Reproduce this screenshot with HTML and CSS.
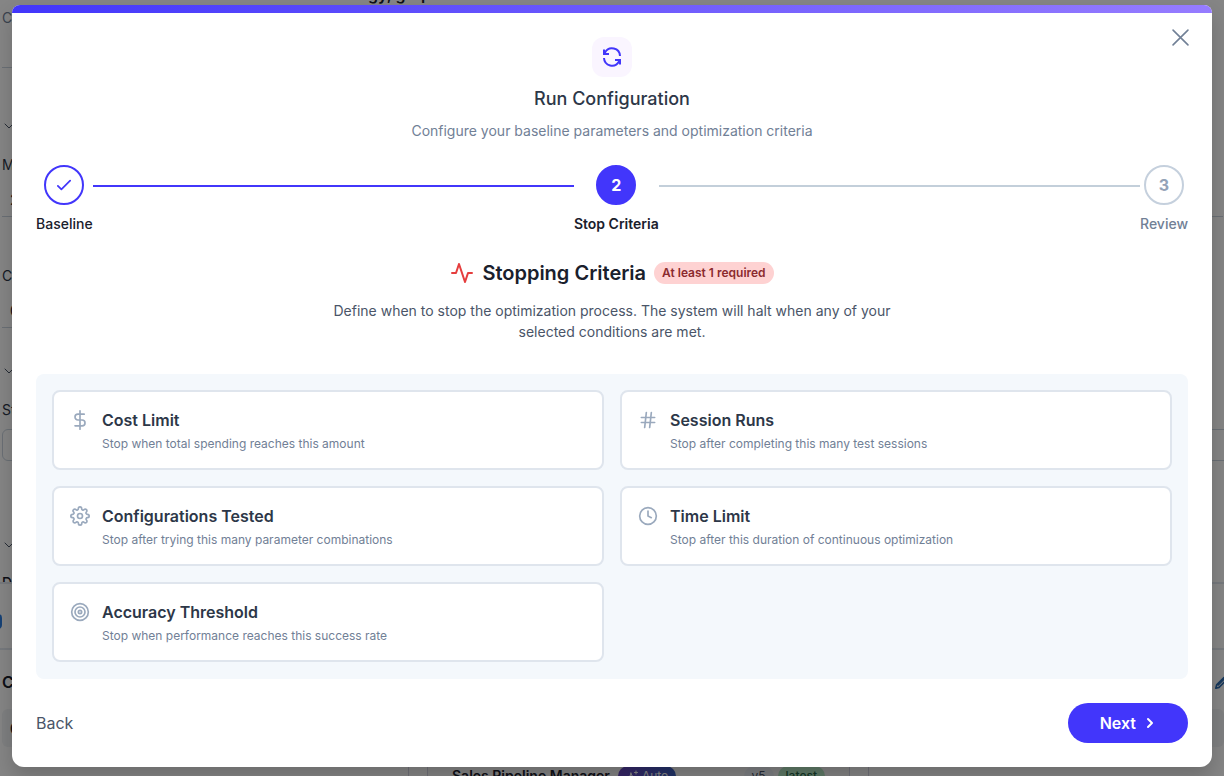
FILE: index.html
```html
<!DOCTYPE html>
<html lang="en">
<head>
<meta charset="utf-8">
<meta name="viewport" content="width=device-width, initial-scale=1">
<title>Run Configuration</title>
<link rel="stylesheet" href="styles.css">
</head>
<body>
<div class="page" aria-hidden="true">
  <span class="bg-item page-heading">gy, graph</span>
  <span class="bg-item page-copy">Co</span>
  <span class="bg-item rule rule-a"></span>
  <svg class="bg-item chev chev-a" viewBox="0 0 12 12"><path d="M2 4l4 4 4-4"/></svg>
  <span class="bg-item label label-a">M</span>
  <span class="bg-item value value-a">2</span>
  <span class="bg-item rule rule-b"></span>
  <span class="bg-item label label-b">C</span>
  <span class="bg-item value value-b">0</span>
  <span class="bg-item rule rule-c"></span>
  <svg class="bg-item chev chev-b" viewBox="0 0 12 12"><path d="M2 4l4 4 4-4"/></svg>
  <span class="bg-item label label-c">St</span>
  <span class="bg-item field"></span>
  <svg class="bg-item chev chev-c" viewBox="0 0 12 12"><path d="M2 4l4 4 4-4"/></svg>
  <span class="bg-item cut-label">D</span>
  <span class="bg-item divider divider-a"></span>
  <span class="bg-item blue-chip"></span>
  <span class="bg-item divider divider-b"></span>
  <span class="bg-item section">C</span>
  <span class="bg-item row-box"></span>
  <span class="bg-item dot-value">0</span>
  <svg class="bg-item pencil" viewBox="0 0 16 16"><path d="M1 15l1-4L11 2l3 3-9 9-4 1zM4 11l7-7"/></svg>
  <div class="bg-item lane">
    <div class="lane-card">
      <strong class="lane-name">Sales Pipeline Manager</strong>
      <span class="lane-auto"><svg viewBox="0 0 12 12"><path d="M5 3l1 3 3 1-3 1-1 3-1-3-3-1 3-1zM10 1v3M8.500 2.500h3"/></svg>Auto</span>
      <span class="lane-version">v5</span>
      <span class="lane-latest">latest</span>
    </div>
  </div>
</div>

<div class="overlay">
  <main class="modal" role="dialog" aria-modal="true" aria-labelledby="dialog-title">
    <div class="accent"></div>
    <button class="close" type="button" aria-label="Close">
      <svg viewBox="0 0 16 16"><path d="M1 1l14 14M15 1L1 15"/></svg>
    </button>
    <div class="content">
      <header class="header">
        <span class="header-icon">
          <svg viewBox="0 0 20 20"><path d="M18 9A8 8 0 0 0 3 5.500L2 7M2 2.500V7h5M2 11a8 8 0 0 0 15 3.500l1-1.500M18 17.500V13h-5"/></svg>
        </span>
        <h1 class="title" id="dialog-title">Run Configuration</h1>
        <p class="subtitle">Configure your baseline parameters and optimization criteria</p>
      </header>

      <ol class="steps">
        <li class="step">
          <span class="circle circle-done"><svg viewBox="0 0 16 16"><path d="M1 9l4 4L15 3"/></svg></span>
          <span class="step-label">Baseline</span>
        </li>
        <li class="line line-done" role="presentation"></li>
        <li class="step" aria-current="step">
          <span class="circle circle-current">2</span>
          <span class="step-label step-label-current">Stop Criteria</span>
        </li>
        <li class="line" role="presentation"></li>
        <li class="step">
          <span class="circle">3</span>
          <span class="step-label step-label-next">Review</span>
        </li>
      </ol>

      <section class="intro">
        <div class="intro-heading">
          <svg class="pulse" viewBox="0 0 24 24"><path d="M22 12h-4l-3 9L9 3l-3 9H2"/></svg>
          <h2 class="intro-title">Stopping Criteria</h2>
          <span class="badge">At least 1 required</span>
        </div>
        <p class="intro-copy">Define when to stop the optimization process. The system will halt when any of your selected conditions are met.</p>
      </section>

      <section class="options">
        <button class="option" type="button">
          <svg class="option-icon" viewBox="0 0 24 24"><path d="M12 1v22M17 5H9.500a3.500 3.500 0 0 0 0 7h5a3.500 3.500 0 0 1 0 7H6"/></svg>
          <span class="option-text"><span class="option-title">Cost Limit</span><span class="option-copy">Stop when total spending reaches this amount</span></span>
        </button>
        <button class="option" type="button">
          <svg class="option-icon" viewBox="0 0 24 24"><path d="M4 9h16M4 15h16M10 3L8 21M16 3l-2 18"/></svg>
          <span class="option-text"><span class="option-title">Session Runs</span><span class="option-copy">Stop after completing this many test sessions</span></span>
        </button>
        <button class="option" type="button">
          <svg class="option-icon" viewBox="0 0 24 24"><circle cx="12" cy="12" r="3"/><path d="M19.400 15a1.650 1.650 0 0 0 .33 1.820l.06.06a2 2 0 1 1-2.830 2.830l-.06-.06a1.650 1.650 0 0 0-2.800 1.170V21a2 2 0 0 1-4 0v-.09a1.650 1.650 0 0 0-2.900-1.260l-.06.06a2 2 0 1 1-2.830-2.830l.06-.06A1.650 1.650 0 0 0 3.180 14H3a2 2 0 0 1 0-4h.09a1.650 1.650 0 0 0 1.260-2.820l-.06-.06a2 2 0 1 1 2.830-2.830l.06.06A1.650 1.650 0 0 0 10 3.180V3a2 2 0 0 1 4 0v.09a1.650 1.650 0 0 0 2.820 1.260l.06-.06a2 2 0 1 1 2.830 2.830l-.06.06A1.650 1.650 0 0 0 20.910 10H21a2 2 0 0 1 0 4h-.09a1.650 1.650 0 0 0-1.510 1z"/></svg>
          <span class="option-text"><span class="option-title">Configurations Tested</span><span class="option-copy">Stop after trying this many parameter combinations</span></span>
        </button>
        <button class="option" type="button">
          <svg class="option-icon" viewBox="0 0 24 24"><circle cx="12" cy="12" r="10"/><path d="M12 6v6l4 2"/></svg>
          <span class="option-text"><span class="option-title">Time Limit</span><span class="option-copy">Stop after this duration of continuous optimization</span></span>
        </button>
        <button class="option" type="button">
          <svg class="option-icon" viewBox="0 0 24 24"><circle cx="12" cy="12" r="10"/><circle cx="12" cy="12" r="6"/><circle cx="12" cy="12" r="2"/></svg>
          <span class="option-text"><span class="option-title">Accuracy Threshold</span><span class="option-copy">Stop when performance reaches this success rate</span></span>
        </button>
      </section>

      <footer class="footer">
        <button class="back" type="button">Back</button>
        <button class="next" type="button">Next <svg viewBox="0 0 12 12"><path d="M4 2l4 4-4 4"/></svg></button>
      </footer>
    </div>
  </main>
</div>
</body>
</html>
```

FILE: styles.css
```css
* { box-sizing: border-box; }
body {
  margin: 0;
  min-height: 100vh;
  overflow: hidden;
  color: #1a202c;
  font: 400 14px/20px Inter, "Liberation Sans", sans-serif;
}
h1, h2, p, ol { margin: 0; padding: 0; }
button { padding: 0; border: 0; background: none; color: inherit; font: inherit; cursor: pointer; }
svg { display: block; fill: none; stroke: currentColor; stroke-width: 2; stroke-linecap: round; stroke-linejoin: round; }

/* Workspace that stays visible round the dialog */
.page { position: fixed; inset: 0; overflow: hidden; background: #fff; }
.bg-item { position: absolute; }
.page-heading { left: 368px; top: -16px; font-size: 16px; font-weight: 600; }
.page-copy { left: 2px; top: 8px; color: #718096; }
.rule { left: 2px; right: 1px; height: 1px; background: #cbd5e0; }
.rule-a { top: 67px; right: 50%; }
.rule-b { top: 216px; }
.rule-c { top: 327px; right: 50%; }
.chev { left: 3px; width: 12px; height: 12px; color: #4a5568; stroke-width: 1; }
.chev-a { top: 120px; }
.chev-b { top: 365px; }
.chev-c { top: 539px; }
.label { left: 2px; color: #2d3748; }
.label-a { top: 155px; }
.label-b { top: 266px; }
.label-c { top: 400px; }
.value { left: 10px; }
.value-a { top: 190px; }
.value-b { top: 301px; }
.field { left: 2px; right: -8px; top: 429px; height: 32px; border: 1px solid #cbd5e0; border-radius: 6px; }
.cut-label { left: 2px; top: 573px; height: 10px; overflow: hidden; font-weight: 500; }
.divider { left: 0; right: 0; height: 2px; background: #e2e8f0; }
.divider-a { top: 582px; }
.divider-b { top: 648px; }
.blue-chip { left: -8px; top: 614px; width: 10px; height: 15px; border-radius: 4px; background: #2b7de0; }
.section { left: 2px; top: 672px; font-size: 16px; font-weight: 600; }
.row-box { left: 2px; right: 0; top: 709px; height: 38px; border-radius: 6px; background: #f1f3f5; }
.dot-value { left: 10px; top: 719px; font-weight: 600; }
.pencil { left: 1215px; top: 676px; width: 13px; height: 13px; color: #2b6cb0; }
.lane { left: 408px; top: 740px; width: 461px; height: 60px; padding: 0 18px; border: 1px solid #d5d5e5; border-width: 0 1px; }
.lane-card { display: flex; align-items: center; height: 72px; padding: 0 24px; border: 1px solid #d5d5e5; border-width: 0 1px; background: #fafafa; }
.lane-name { margin-right: 8px; font-size: 14px; font-weight: 600; white-space: nowrap; }
.lane-auto { display: flex; align-items: center; gap: 4px; padding: 0 8px; border-radius: 10px; background: linear-gradient(90deg, #6b46c1, #3b5fc0); color: #fff; font-size: 12px; }
.lane-auto svg { width: 12px; height: 12px; stroke-width: 1; }
.lane-version { margin-left: auto; padding: 0 8px; border-radius: 10px; background: #edf2f7; color: #4a5568; font-size: 12px; }
.lane-latest { margin-left: 4px; padding: 0 8px; border-radius: 10px; background: #b4e8c4; color: #276749; font-size: 12px; font-weight: 500; }

/* Dialog */
.overlay { position: fixed; inset: 0; padding: 5px 12px; overflow: auto; background: rgba(0, 0, 0, .48); }
.modal {
  position: relative;
  border-radius: 8px 8px 12px 12px;
  background: #fff;
  box-shadow: 0 10px 20px rgba(0, 0, 0, .18);
}
.accent { height: 8px; border-radius: 8px 8px 0 0; background: linear-gradient(90deg, #4236fb, #967cff); }
.close { position: absolute; top: 16px; right: 16px; display: grid; place-items: center; width: 32px; height: 32px; color: #718096; }
.close svg { width: 17px; height: 17px; stroke-width: 1.5; }
.content { padding: 24px; }
.header { display: flex; flex-direction: column; align-items: center; gap: 8px; text-align: center; }
.header-icon { display: grid; place-items: center; width: 40px; height: 40px; border-radius: 12px; background: #faf5ff; color: #4236fb; }
.header-icon svg { width: 20px; height: 20px; stroke-linecap: butt; stroke-linejoin: miter; }
.title { color: #2d3748; font-size: 18px; font-weight: 500; line-height: 27px; }
.subtitle { color: #718096; line-height: 21px; }

.steps { display: flex; margin-top: 24px; list-style: none; }
.step { display: flex; flex-direction: column; align-items: center; gap: 8px; }
.circle { display: grid; place-items: center; width: 40px; height: 40px; border: 2px solid #c5d0dd; border-radius: 50%; color: #94a3b8; font-size: 16px; font-weight: 700; }
.circle svg { width: 14px; height: 14px; }
.circle-done { border-color: #4236fb; color: #4236fb; }
.circle-current { border-color: #4236fb; background: #4236fb; color: #fff; }
.step-label { font-weight: 500; line-height: 21px; white-space: nowrap; }
.step-label-current { font-weight: 600; }
.step-label-next { color: #718096; }
.line { flex: 1; height: 2px; margin-top: 20px; background: #c3cfda; }
.line-done { background: #4236fb; }

.intro { margin-top: 24px; text-align: center; }
.intro-heading { display: flex; justify-content: center; align-items: center; gap: 8px; }
.pulse { width: 24px; height: 24px; color: #e53e3e; }
.intro-title { font-size: 20px; font-weight: 600; line-height: 30px; }
.badge { padding: 2px 8px; border-radius: 12px; background: #fed2d2; color: #8b2a2e; font-size: 12px; font-weight: 600; line-height: 18px; }
.intro-copy { max-width: 576px; margin: 12px auto 0; color: #4a5568; line-height: 21px; }

.options { display: grid; grid-template-columns: repeat(2, minmax(0, 1fr)); gap: 16px; margin-top: 32px; padding: 16px 16px 17px; border-radius: 8px; background: #f4f8fc; }
.option { display: flex; align-items: flex-start; gap: 12px; padding: 16px 16px 14px; border: 2px solid #dfe5ed; border-radius: 8px; background: #fff; text-align: left; }
.option-icon { flex: none; width: 20px; height: 20px; margin-top: 2px; color: #9aa9bd; }
.option-text { display: grid; gap: 2px; }
.option-title { color: #2d3748; font-size: 16px; font-weight: 600; line-height: 24px; }
.option-copy { color: #718096; font-size: 12px; line-height: 20px; }

.footer { display: flex; justify-content: space-between; align-items: center; margin-top: 24px; }
.back { height: 40px; color: #4a5568; font-size: 16px; }
.next { display: flex; align-items: center; gap: 8px; height: 40px; padding: 0 32px; border-radius: 20px; background: #4236fb; color: #fff; font-size: 16px; font-weight: 600; }
.next svg { width: 12px; height: 12px; }
```
